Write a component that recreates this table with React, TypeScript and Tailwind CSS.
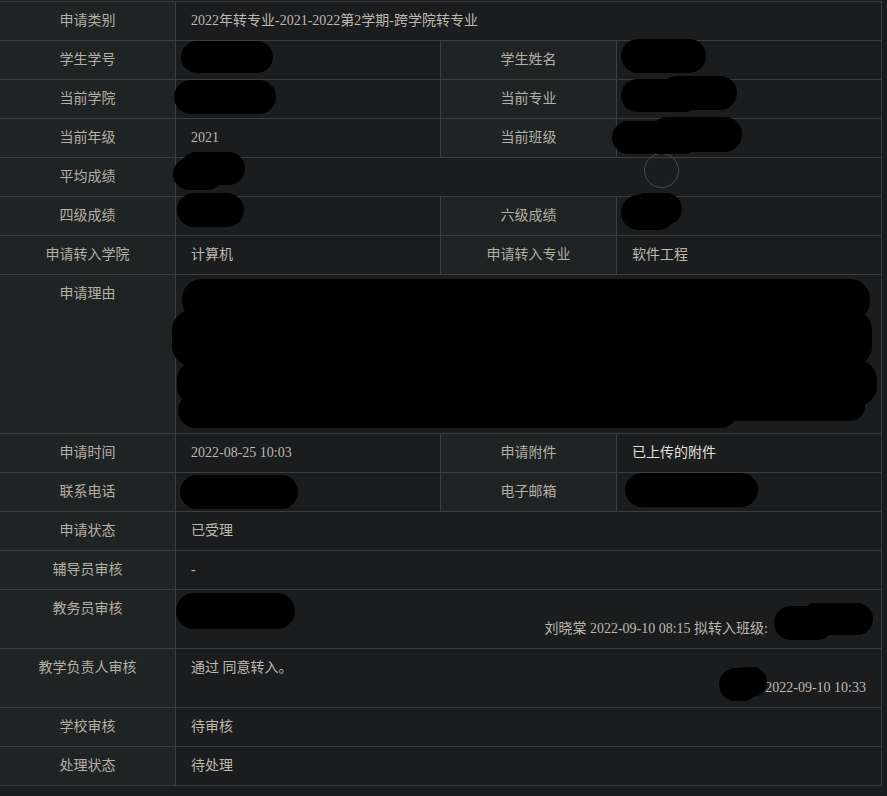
import type { ReactNode } from 'react';

const font = 'font-["Liberation_Serif","Noto_Sans_CJK_SC",serif]';

function Label({ children }: { children?: ReactNode }) {
  return (
    <div className="w-[176px] shrink-0 border-r border-[#3a3e40] bg-[#202324] px-2 py-[9px] text-center leading-5 text-[#b5afa4]">
      {children}
    </div>
  );
}

function Value({ children, half, className = '' }: { children?: ReactNode; half?: boolean; className?: string }) {
  return (
    <div
      className={`${half ? 'w-[265px] shrink-0 border-r border-[#3a3e40]' : 'flex-1'} bg-[#1b1c1e] px-[15px] py-[9px] leading-5 text-[#bfb9ad] ${className}`}
    >
      {children}
    </div>
  );
}

function Row({ children }: { children: ReactNode }) {
  return <div className="flex border-b border-[#3a3e40]">{children}</div>;
}

// redaction marks, page coordinates
const marks: [number, number, number, number][] = [
  [181, 41, 92, 32],
  [621, 39, 85, 34],
  [174, 80, 102, 34],
  [621, 79, 80, 33],
  [660, 76, 77, 34],
  [612, 121, 88, 33],
  [650, 117, 92, 35],
  [180, 152, 65, 33],
  [173, 158, 50, 32],
  [177, 193, 67, 34],
  [621, 195, 55, 35],
  [630, 193, 52, 32],
  [182, 279, 688, 42],
  [172, 310, 700, 56],
  [177, 360, 700, 46],
  [178, 393, 560, 35],
  [680, 391, 185, 30],
  [180, 475, 118, 34],
  [625, 473, 133, 34],
  [176, 593, 119, 36],
  [774, 606, 60, 34],
  [800, 603, 73, 32],
  [719, 668, 40, 33],
  [730, 667, 37, 30],
];

export default function App() {
  return (
    <div className={`relative min-h-[796px] bg-[#1b1c1e] pt-px text-[14px] ${font}`}>
      <div className="w-[882px] border-t border-r border-[#3a3e40]">
        <Row>
          <Label>申请类别</Label>
          <Value>2022年转专业-2021-2022第2学期-跨学院转专业</Value>
        </Row>
        <Row>
          <Label>学生学号</Label>
          <Value half />
          <Label>学生姓名</Label>
          <Value />
        </Row>
        <Row>
          <Label>当前学院</Label>
          <Value half />
          <Label>当前专业</Label>
          <Value />
        </Row>
        <Row>
          <Label>当前年级</Label>
          <Value half>2021</Value>
          <Label>当前班级</Label>
          <Value />
        </Row>
        <Row>
          <Label>平均成绩</Label>
          <Value>&nbsp;</Value>
        </Row>
        <Row>
          <Label>四级成绩</Label>
          <Value half />
          <Label>六级成绩</Label>
          <Value />
        </Row>
        <Row>
          <Label>申请转入学院</Label>
          <Value half>计算机</Value>
          <Label>申请转入专业</Label>
          <Value>软件工程</Value>
        </Row>
        <Row>
          <Label>申请理由</Label>
          <Value className="h-[158px]" />
        </Row>
        <Row>
          <Label>申请时间</Label>
          <Value half>2022-08-25 10:03</Value>
          <Label>申请附件</Label>
          <Value className="text-[#e4e0d8]">已上传的附件</Value>
        </Row>
        <Row>
          <Label>联系电话</Label>
          <Value half />
          <Label>电子邮箱</Label>
          <Value />
        </Row>
        <Row>
          <Label>申请状态</Label>
          <Value>已受理</Value>
        </Row>
        <Row>
          <Label>辅导员审核</Label>
          <Value>-</Value>
        </Row>
        <Row>
          <Label>教务员审核</Label>
          <Value>
            <div>&nbsp;</div>
            <div className="text-right">
              刘晓棠 2022-09-10 08:15 拟转入班级:<span className="inline-block w-[98px]" />
            </div>
          </Value>
        </Row>
        <Row>
          <Label>教学负责人审核</Label>
          <Value>
            <div>通过 同意转入。</div>
            <div className="text-right">2022-09-10 10:33</div>
          </Value>
        </Row>
        <Row>
          <Label>学校审核</Label>
          <Value>待审核</Value>
        </Row>
        <Row>
          <Label>处理状态</Label>
          <Value>待处理</Value>
        </Row>
      </div>

      {/* loading ring left over the page */}
      <div className="absolute left-[644px] top-[153px] h-[35px] w-[35px] rounded-full border border-[#4a4d50]" />

      <svg className="pointer-events-none absolute left-0 top-0" width="887" height="796">
        {marks.map(([x, y, w, h], i) => (
          <rect key={i} x={x} y={y} width={w} height={h} rx={Math.min(h / 2, 20)} fill="#000" />
        ))}
      </svg>
    </div>
  );
}
